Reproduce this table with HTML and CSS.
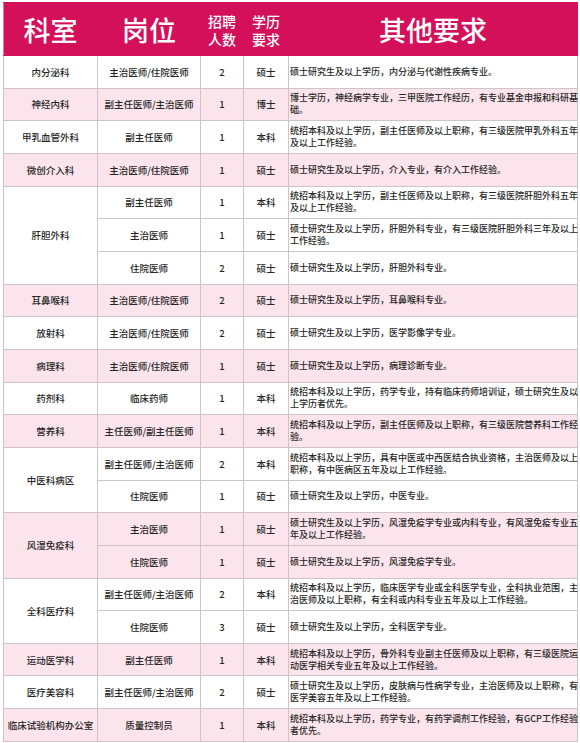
FILE: index.html
```html
<!DOCTYPE html>
<html lang="zh-CN">
<head>
<meta charset="utf-8">
<title>招聘岗位</title>
<link rel="stylesheet" href="styles.css">
</head>
<body>
<div class="sheet">
<table class="jobs">
<colgroup>
<col class="c-dept"><col class="c-post"><col class="c-num"><col class="c-edu"><col class="c-req">
</colgroup>
<thead>
<tr>
<th class="big">科室</th>
<th class="big">岗位</th>
<th class="small">招聘<br>人数</th>
<th class="small">学历<br>要求</th>
<th class="big">其他要求</th>
</tr>
</thead>
<tbody>
<tr><td>内分泌科</td><td>主治医师/住院医师</td><td>2</td><td>硕士</td><td class="req">硕士研究生及以上学历，内分泌与代谢性疾病专业。</td></tr>
<tr class="pink"><td>神经内科</td><td>副主任医师/主治医师</td><td>1</td><td>博士</td><td class="req">博士学历，神经病学专业，三甲医院工作经历，有专业基金申报和科研基<br>础。</td></tr>
<tr><td>甲乳血管外科</td><td>副主任医师</td><td>1</td><td>本科</td><td class="req">统招本科及以上学历，副主任医师及以上职称，有三级医院甲乳外科五年<br>及以上工作经验。</td></tr>
<tr class="pink"><td>微创介入科</td><td>主治医师/住院医师</td><td>1</td><td>硕士</td><td class="req">硕士研究生及以上学历，介入专业，有介入工作经验。</td></tr>
<tr><td rowspan="3">肝胆外科</td><td>副主任医师</td><td>1</td><td>本科</td><td class="req">统招本科及以上学历，副主任医师及以上职称，有三级医院肝胆外科五年<br>及以上工作经验。</td></tr>
<tr><td>主治医师</td><td>1</td><td>硕士</td><td class="req">硕士研究生及以上学历，肝胆外科专业，有三级医院肝胆外科三年及以上<br>工作经验。</td></tr>
<tr><td>住院医师</td><td>2</td><td>硕士</td><td class="req">硕士研究生及以上学历，肝胆外科专业。</td></tr>
<tr class="pink"><td>耳鼻喉科</td><td>主治医师/住院医师</td><td>2</td><td>硕士</td><td class="req">硕士研究生及以上学历，耳鼻喉科专业。</td></tr>
<tr><td>放射科</td><td>主治医师/住院医师</td><td>2</td><td>硕士</td><td class="req">硕士研究生及以上学历，医学影像学专业。</td></tr>
<tr class="pink"><td>病理科</td><td>主治医师/住院医师</td><td>1</td><td>硕士</td><td class="req">硕士研究生及以上学历，病理诊断专业。</td></tr>
<tr><td>药剂科</td><td>临床药师</td><td>1</td><td>本科</td><td class="req">统招本科及以上学历，药学专业，持有临床药师培训证，硕士研究生及以<br>上学历者优先。</td></tr>
<tr class="pink"><td>营养科</td><td>主任医师/副主任医师</td><td>1</td><td>本科</td><td class="req">统招本科及以上学历，副主任医师及以上职称，有三级医院营养科工作经<br>验。</td></tr>
<tr><td rowspan="2">中医科病区</td><td>副主任医师/主治医师</td><td>2</td><td>本科</td><td class="req">统招本科及以上学历，具有中医或中西医结合执业资格，主治医师及以上<br>职称，有中医病区五年及以上工作经验。</td></tr>
<tr><td>住院医师</td><td>1</td><td>硕士</td><td class="req">硕士研究生及以上学历，中医专业。</td></tr>
<tr class="pink"><td rowspan="2">风湿免疫科</td><td>主治医师</td><td>1</td><td>硕士</td><td class="req">硕士研究生及以上学历，风湿免疫学专业或内科专业，有风湿免疫专业五<br>年及以上工作经验。</td></tr>
<tr class="pink"><td>住院医师</td><td>1</td><td>硕士</td><td class="req">硕士研究生及以上学历，风湿免疫学专业。</td></tr>
<tr><td rowspan="2">全科医疗科</td><td>副主任医师/主治医师</td><td>2</td><td>本科</td><td class="req">统招本科及以上学历，临床医学专业或全科医学专业，全科执业范围，主<br>治医师及以上职称，有全科或内科专业五年及以上工作经验。</td></tr>
<tr><td>住院医师</td><td>3</td><td>硕士</td><td class="req">硕士研究生及以上学历，全科医学专业。</td></tr>
<tr class="pink"><td>运动医学科</td><td>副主任医师</td><td>1</td><td>本科</td><td class="req">统招本科及以上学历，骨外科专业副主任医师及以上职称，有三级医院运<br>动医学相关专业五年及以上工作经验。</td></tr>
<tr><td>医疗美容科</td><td>副主任医师/主治医师</td><td>2</td><td>硕士</td><td class="req">硕士研究生及以上学历，皮肤病与性病学专业，主治医师及以上职称，有<br>医学美容五年及以上工作经验。</td></tr>
<tr class="pink"><td>临床试验机构办公室</td><td>质量控制员</td><td>1</td><td>本科</td><td class="req">统招本科及以上学历，药学专业，有药学调剂工作经验，有GCP工作经验<br>者优先。</td></tr>
</tbody>
</table>
</div>
</body>
</html>
```

FILE: styles.css
```css
html, body {
  margin: 0;
  padding: 0;
  background: #ffffff;
}

body {
  font-family: "Noto Sans CJK SC", "Noto Sans", sans-serif;
  color: #262626;
}

.sheet {
  padding: 2px 3px 0 3px;
}

.jobs {
  border-collapse: collapse;
  table-layout: fixed;
  width: 574px;
}

.c-dept { width: 94px; }
.c-post { width: 103px; }
.c-num { width: 43px; }
.c-edu { width: 45px; }
.c-req { width: 289px; }

.jobs th {
  background: #d5105a;
  color: #ffffff;
  height: 50px;
  padding: 2px 0 0 0;
  font-weight: 500;
  text-align: center;
  vertical-align: middle;
  border: 1px solid #d5105a;
  border-left-color: #e77ba5;
}

.jobs th.big {
  font-size: 27px;
  line-height: 30px;
}

.jobs th.small {
  font-size: 14px;
  line-height: 18px;
}

.jobs td {
  height: 31.67px;
  padding: 0;
  border: 1px solid #cdc3c8;
  text-align: center;
  vertical-align: middle;
  font-size: 9.5px;
  line-height: 12px;
  font-weight: 500;
  background: #ffffff;
}

.jobs tr.pink td {
  background: #fce4ec;
}

.jobs td.req {
  text-align: left;
  font-size: 9px;
  line-height: 12px;
  padding-left: 1px;
  white-space: nowrap;
  border-left-color: #a9a3a6;
}
```
